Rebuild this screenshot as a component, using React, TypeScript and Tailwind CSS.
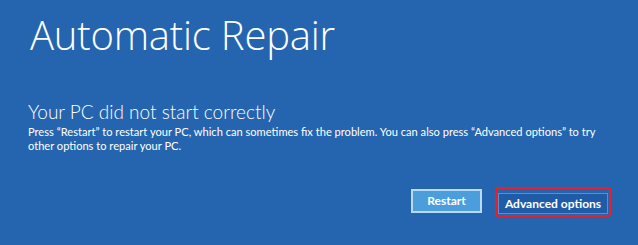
export default function App() {
  return (
    <div className="flex h-[245px] w-[638px] flex-col bg-[#2565b0] pl-[28px] pr-[27px] text-white [font-family:'Lato','Open_Sans',sans-serif]">
      <h1 className="mt-[11px] pl-[2px] text-[40px] font-light leading-[48px] tracking-[-0.2px] [font-family:'Open_Sans',sans-serif]">
        Automatic Repair
      </h1>
      <h2 className="mt-[40px] text-[19px] font-light leading-[25px]">
        Your PC did not start correctly
      </h2>
      <p className="mt-[1px] whitespace-nowrap text-[11.1px] leading-[14px]">
        Press “Restart” to restart your PC, which can sometimes fix the problem. You can also press “Advanced options” to try
        <br />
        other options to repair your PC.
      </p>
      <div className="mt-auto mb-[28px] flex items-center justify-end gap-[13px]">
        <button
          type="button"
          className="h-[24px] w-[71px] border-2 border-[#b9daf2] bg-[#4a9edb] text-[12px] font-bold text-white"
        >
          Restart
        </button>
        <div className="mt-[2px] rounded-[3px] border-2 border-[#e8202a] p-[1px]">
          <button
            type="button"
            className="h-[21px] w-[110px] border border-[#5b8fcb] bg-[#1f5ba6] text-[12px] font-bold text-white"
          >
            Advanced options
          </button>
        </div>
      </div>
    </div>
  );
}
